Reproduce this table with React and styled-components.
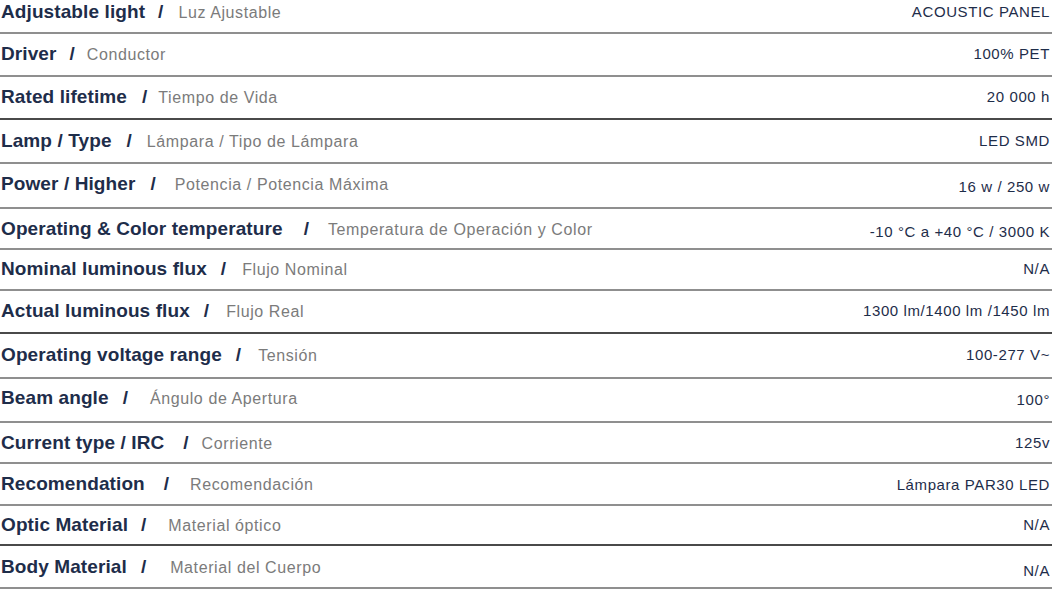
import React from 'react';
import styled, { createGlobalStyle } from 'styled-components';

const GlobalStyle = createGlobalStyle`
  body {
    margin: 0;
    background: #ffffff;
    font-family: "Liberation Sans", Arial, sans-serif;
  }
`;

const SpecTable = styled.div`
  width: 1052px;
  display: flex;
  flex-direction: column;
`;

const SpecRow = styled.div`
  height: ${(p) => p.$h}px;
  box-sizing: border-box;
  display: flex;
  align-items: flex-start;
  justify-content: space-between;
  padding-top: ${(p) => p.$top}px;
  padding-right: 2px;
  border-bottom: 2px solid ${(p) => (p.$dark ? '#4a4a4a' : '#8f8f8f')};
`;

const LabelGroup = styled.div`
  display: flex;
  align-items: baseline;
  line-height: 20px;
  padding-left: 1px;
`;

const Label = styled.span`
  font-size: 19px;
  font-weight: 700;
  color: #1e2d4a;
  letter-spacing: 0.1px;
  white-space: nowrap;
`;

const Slash = styled.span`
  font-size: 19px;
  font-weight: 700;
  color: #1e2d4a;
  margin-left: ${(p) => p.$gap}px;
`;

const Sub = styled.span`
  font-size: 16px;
  letter-spacing: 0.6px;
  color: #7b7b7b;
  margin-left: ${(p) => p.$gap}px;
  white-space: nowrap;
`;

const Value = styled.span`
  font-size: 15px;
  letter-spacing: 0.6px;
  line-height: 20px;
  color: #1e2d4a;
  white-space: nowrap;
  margin-top: ${(p) => p.$drop}px;
`;

const specs = [
  { en: 'Adjustable light', es: 'Luz Ajustable', value: 'ACOUSTIC PANEL', h: 34, top: 2, g: [13, 15] },
  { en: 'Driver', es: 'Conductor', value: '100% PET', h: 43, top: 10, g: [13, 12] },
  { en: 'Rated lifetime', es: 'Tiempo de Vida', value: '20 000 h', h: 43, top: 10, g: [15, 11], dark: true },
  { en: 'Lamp / Type', es: 'Lámpara / Tipo de Lámpara', value: 'LED SMD', h: 44, top: 11, g: [15, 15] },
  { en: 'Power / Higher', es: 'Potencia / Potencia Máxima', value: '16 w / 250 w', h: 45, top: 10, g: [15, 19], drop: 3 },
  { en: 'Operating & Color temperature', es: 'Temperatura de Operación y Color', value: '-10 °C a +40 °C / 3000 K', h: 41, top: 10, g: [21, 19], drop: 3 },
  { en: 'Nominal luminous flux', es: 'Flujo Nominal', value: 'N/A', h: 41, top: 9, g: [14, 16] },
  { en: 'Actual luminous flux', es: 'Flujo Real', value: '1300 lm/1400 lm /1450 lm', h: 43, top: 10, g: [14, 17], dark: true },
  { en: 'Operating voltage range', es: 'Tensión', value: '100-277 V~', h: 45, top: 11, g: [14, 17] },
  { en: 'Beam angle', es: 'Ángulo de Apertura', value: '100°', h: 44, top: 9, g: [14, 22], drop: 2 },
  { en: 'Current type / IRC', es: 'Corriente', value: '125v', h: 41, top: 10, g: [19, 13] },
  { en: 'Recomendation', es: 'Recomendación', value: 'Lámpara PAR30 LED', h: 42, top: 10, g: [19, 21], drop: 1 },
  { en: 'Optic Material', es: 'Material óptico', value: 'N/A', h: 40, top: 9, g: [13, 22], dark: true },
  { en: 'Body Material', es: 'Material del Cuerpo', value: 'N/A', h: 43, top: 11, g: [14, 24], drop: 4 },
];

const App = () => {
  return (
    <>
      <GlobalStyle />
      <SpecTable>
        {specs.map((row) => (
          <SpecRow key={row.en} $h={row.h} $top={row.top} $dark={row.dark}>
            <LabelGroup>
              <Label>{row.en}</Label>
              <Slash $gap={row.g[0]}>/</Slash>
              <Sub $gap={row.g[1]}>{row.es}</Sub>
            </LabelGroup>
            <Value $drop={row.drop || 0}>{row.value}</Value>
          </SpecRow>
        ))}
      </SpecTable>
    </>
  );
};

export default App;
